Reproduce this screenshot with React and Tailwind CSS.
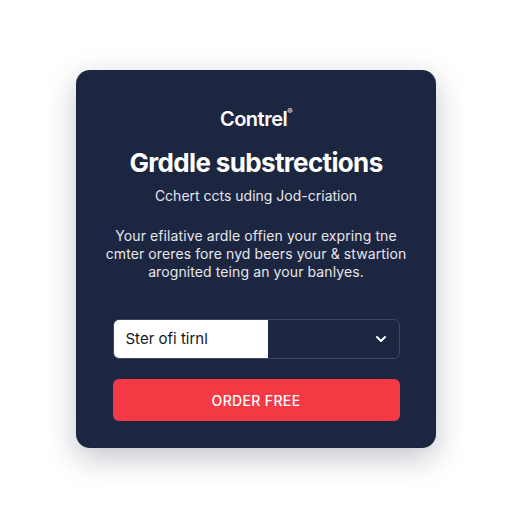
import { ChevronDown } from 'lucide-react';

const App = () => {
    return (
        <div className="w-[512px] h-[512px] bg-white flex items-center justify-center" style={{ fontFamily: 'Inter, "Noto Sans", sans-serif' }}>
            <div className="w-[360px] h-[378px] mt-[6px] bg-[#1d2640] rounded-[14px] shadow-[0_10px_30px_rgba(15,23,42,0.25)] flex flex-col items-center pt-[35px] px-[30px]">
                <div className="text-white text-[20px] font-semibold leading-[28px] tracking-tight">
                    Contrel<sup className="text-[8px] align-super">®</sup>
                </div>
                <h1 className="mt-[14px] text-white text-[26px] font-bold leading-[32px] tracking-tight">
                    Grddle substrections
                </h1>
                <p className="mt-[7px] text-[#e5e7eb] text-[14px] leading-[20px]">
                    Cchert ccts uding Jod-criation
                </p>
                <p className="mt-[21px] text-[#e5e7eb] text-[14px] leading-[18px] text-center whitespace-nowrap tracking-[0.1px]">
                    Your efilative ardle offien your expring tne<br />
                    cmter oreres fore nyd beers your &amp; stwartion<br />
                    arognited teing an your banlyes.
                </p>
                <div className="mt-[38px] w-[287px] h-[40px] flex rounded-[6px] border border-[#3b4660] overflow-hidden">
                    <div className="w-[154px] bg-white flex items-center px-[12px] text-[#111827] text-[15px]">
                        Ster ofi tirnl
                    </div>
                    <div className="flex-1 flex items-center justify-end pr-[10px]">
                        <ChevronDown className="text-white" size={16} strokeWidth={3} />
                    </div>
                </div>
                <button className="mt-[20px] w-[287px] h-[42px] rounded-[6px] bg-[#f53945] text-white text-[14px] font-medium tracking-wide">
                    ORDER FREE
                </button>
            </div>
        </div>
    );
};

export default App;
